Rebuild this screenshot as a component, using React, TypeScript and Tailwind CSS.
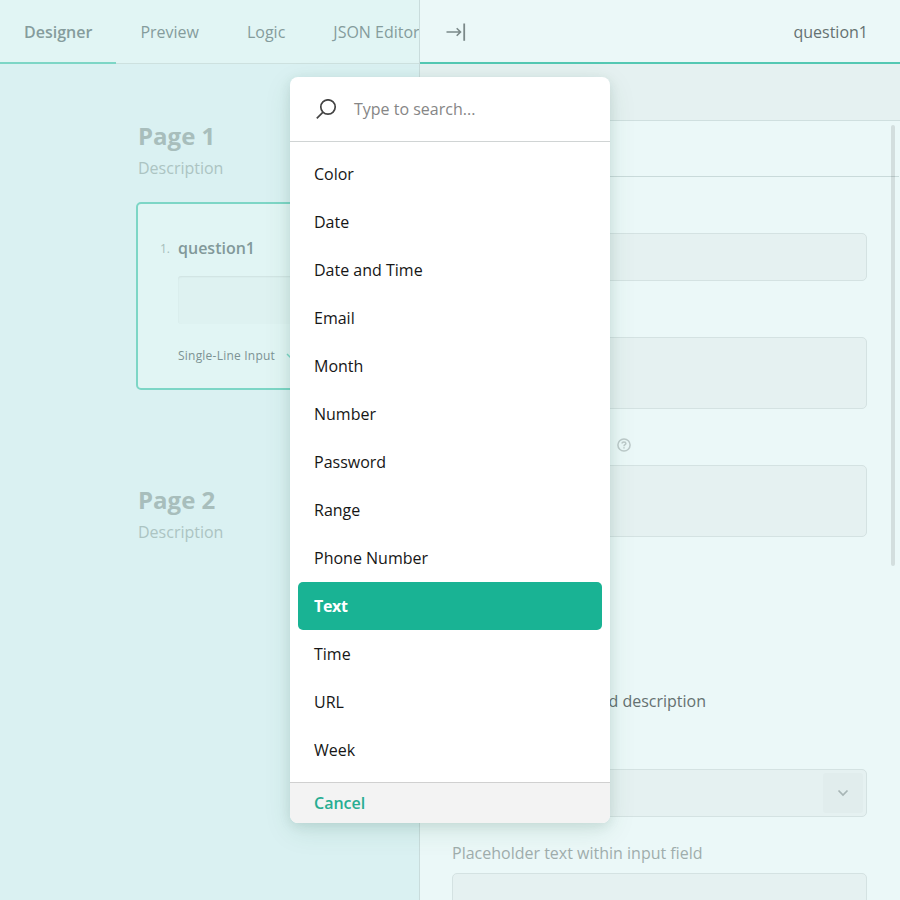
import React from "react";

const tabs = ["Preview", "Logic", "JSON Editor"];

const inputTypes = [
  "Color",
  "Date",
  "Date and Time",
  "Email",
  "Month",
  "Number",
  "Password",
  "Range",
  "Phone Number",
  "Text",
  "Time",
  "URL",
  "Week",
];

function PageHeading({ title }: { title: string }) {
  return (
    <div className="pl-[2px]">
      <h2 className="text-[24px] leading-8 font-bold text-[#a8bebc]">{title}</h2>
      <p className="mt-1 leading-6 text-[#acc4c2]">Description</p>
    </div>
  );
}

function Designer() {
  return (
    <section className="flex h-full w-[420px] shrink-0 flex-col overflow-hidden border-r border-[#c9dcdc] bg-[#daf1f2]">
      <nav className="flex h-16 shrink-0 bg-[#e1f5f4] whitespace-nowrap text-[#859c9c]">
        <div className="flex w-[116px] shrink-0 items-center border-b-2 border-[#7dd6c6] pt-[2px] pl-6 font-semibold">
          Designer
        </div>
        <div className="flex grow items-center gap-12 border-b border-[#cde1df] pt-[1px] pl-[24.4px]">
          {tabs.map((t) => (
            <span key={t}>{t}</span>
          ))}
        </div>
      </nav>
      <div className="pt-14 pl-[136px]">
        <PageHeading title="Page 1" />
        <div className="mt-[22px] flex h-[188px] w-[600px] flex-col rounded-[5px] border-2 border-[#7dd6c6] bg-[#e1f5f4] pt-8 pl-[22px]">
          <div className="flex items-center">
            <span className="w-[18px] pt-[1px] text-[12px] text-[#a6bdbb]">1.</span>
            <span className="leading-6 font-semibold text-[#82999a]">question1</span>
          </div>
          <div className="mt-4 ml-[18px] h-12 w-[500px] rounded-[3px] bg-[#def2f1] shadow-[inset_0_1px_2px_rgba(0,0,0,0.07)]" />
          <div className="mt-6 ml-[18px] flex h-4 items-center text-[12px] tracking-[0.22px] text-[#7c9293]">
            <span>Single-Line Input</span>
            <svg className="ml-[11px]" width="8" height="6" viewBox="0 0 8 6" fill="none" stroke="#7dd6c6" strokeWidth="1.5">
              <path d="M1 1l3 3 3-3" />
            </svg>
          </div>
        </div>
        <div className="mt-[94px]">
          <PageHeading title="Page 2" />
        </div>
      </div>
    </section>
  );
}

function Field({ className }: { className: string }) {
  return <div className={"rounded-[5px] border border-[#d4e2e2] bg-[#e5f1f1] " + className} />;
}

function PropertyPanel() {
  return (
    <section className="relative flex h-full w-[480px] shrink-0 flex-col overflow-hidden bg-[#ebf8f8]">
      <header className="flex h-16 shrink-0 items-center justify-between border-b-2 border-[#54c8b3] pt-[2px] pr-8 pl-[26px]">
        <svg width="20" height="18" viewBox="0 0 20 18" fill="none" stroke="#7b8989">
          <path d="M0.5 9H14.5M10.7 5.3L14.5 9L10.7 12.7" strokeWidth="1.6" />
          <path d="M18.2 0.5V17.8" strokeWidth="1.8" />
        </svg>
        <span className="text-[#657171]">question1</span>
      </header>
      <div className="h-[57px] shrink-0 border-b border-[#cfdfdf] bg-[#e5f1f1]" />
      <div className="mr-[1px] h-14 shrink-0 border-b border-[#c9dada]" />
      <div className="flex flex-col pt-14 pr-[33px] pl-8">
        <Field className="h-12" />
        <Field className="mt-14 h-[72px]" />
        <div className="mt-[29px] ml-[165px] h-[14px]">
          <svg width="14" height="14" viewBox="0 0 14 14" fill="none">
            <circle cx="7" cy="7" r="6.1" stroke="#bcc9c9" strokeWidth="1.5" />
            <path d="M5.1 5.5C5.1 3.6 8.9 3.6 8.9 5.5C8.9 6.8 7 6.7 7 8.2M7 9.3V10.6" stroke="#bcc9c9" strokeWidth="1.5" />
          </svg>
        </div>
        <Field className="mt-[13px] h-[72px]" />
        <p className="mt-[152px] ml-8 leading-6 whitespace-nowrap text-[#657171]">
          <span className="flex w-[222px] justify-end">Show the title and description</span>
        </p>
        <div className="mt-14 flex h-12 items-center justify-end rounded-[5px] border border-[#d4e2e2] bg-[#e5f1f1] pr-[3px]">
          <div className="flex size-10 items-center justify-center rounded-[3px] bg-[#e1eded]">
            <svg width="12" height="8" viewBox="0 0 12 8" fill="none" stroke="#a7b5b5" strokeWidth="1.7">
              <path d="M1.5 1.5L6 6L10.5 1.5" />
            </svg>
          </div>
        </div>
        <p className="mt-6 leading-6 text-[#9fadac]">Placeholder text within input field</p>
        <Field className="mt-2 h-12" />
      </div>
      <div className="absolute top-[125px] right-[5px] h-[441px] w-1 rounded-full bg-black/10" />
    </section>
  );
}

function TypePopup() {
  return (
    <div className="absolute top-[77px] left-[290px] flex h-[746px] w-[320px] flex-col overflow-hidden rounded-[8px] bg-white shadow-[0_8px_28px_rgba(0,92,50,0.1),0_3px_12px_rgba(0,60,50,0.1)]">
      <div className="flex h-[65px] shrink-0 items-center border-b border-[#d0d4d4] pl-[26px]">
        <svg width="21" height="21" viewBox="0 0 21 21" fill="none" stroke="#444444" strokeWidth="1.7">
          <circle cx="12" cy="8" r="7.2" />
          <path d="M7 13.2L0.8 19.4" />
        </svg>
        <span className="ml-[17px] text-[#868686]">Type to search...</span>
      </div>
      <ul className="flex grow flex-col px-2 pt-2">
        {inputTypes.map((name) => (
          <li
            key={name}
            className={
              name === "Text"
                ? "flex h-12 items-center rounded-[5px] bg-[#19b394] px-4 font-bold tracking-[-0.3px] text-white"
                : "flex h-12 items-center px-4 text-[#161616]"
            }
          >
            {name}
          </li>
        ))}
      </ul>
      <div className="flex h-[41px] shrink-0 items-center border-t border-[#d0d0d0] bg-[#f3f3f3] pl-6 font-semibold text-[#27ad92]">
        Cancel
      </div>
    </div>
  );
}

export default function App() {
  return (
    <main className="relative flex h-[900px] w-[900px] overflow-hidden bg-[#daf1f2] font-['Open_Sans',sans-serif] text-[16px]">
      <Designer />
      <PropertyPanel />
      <TypePopup />
    </main>
  );
}
